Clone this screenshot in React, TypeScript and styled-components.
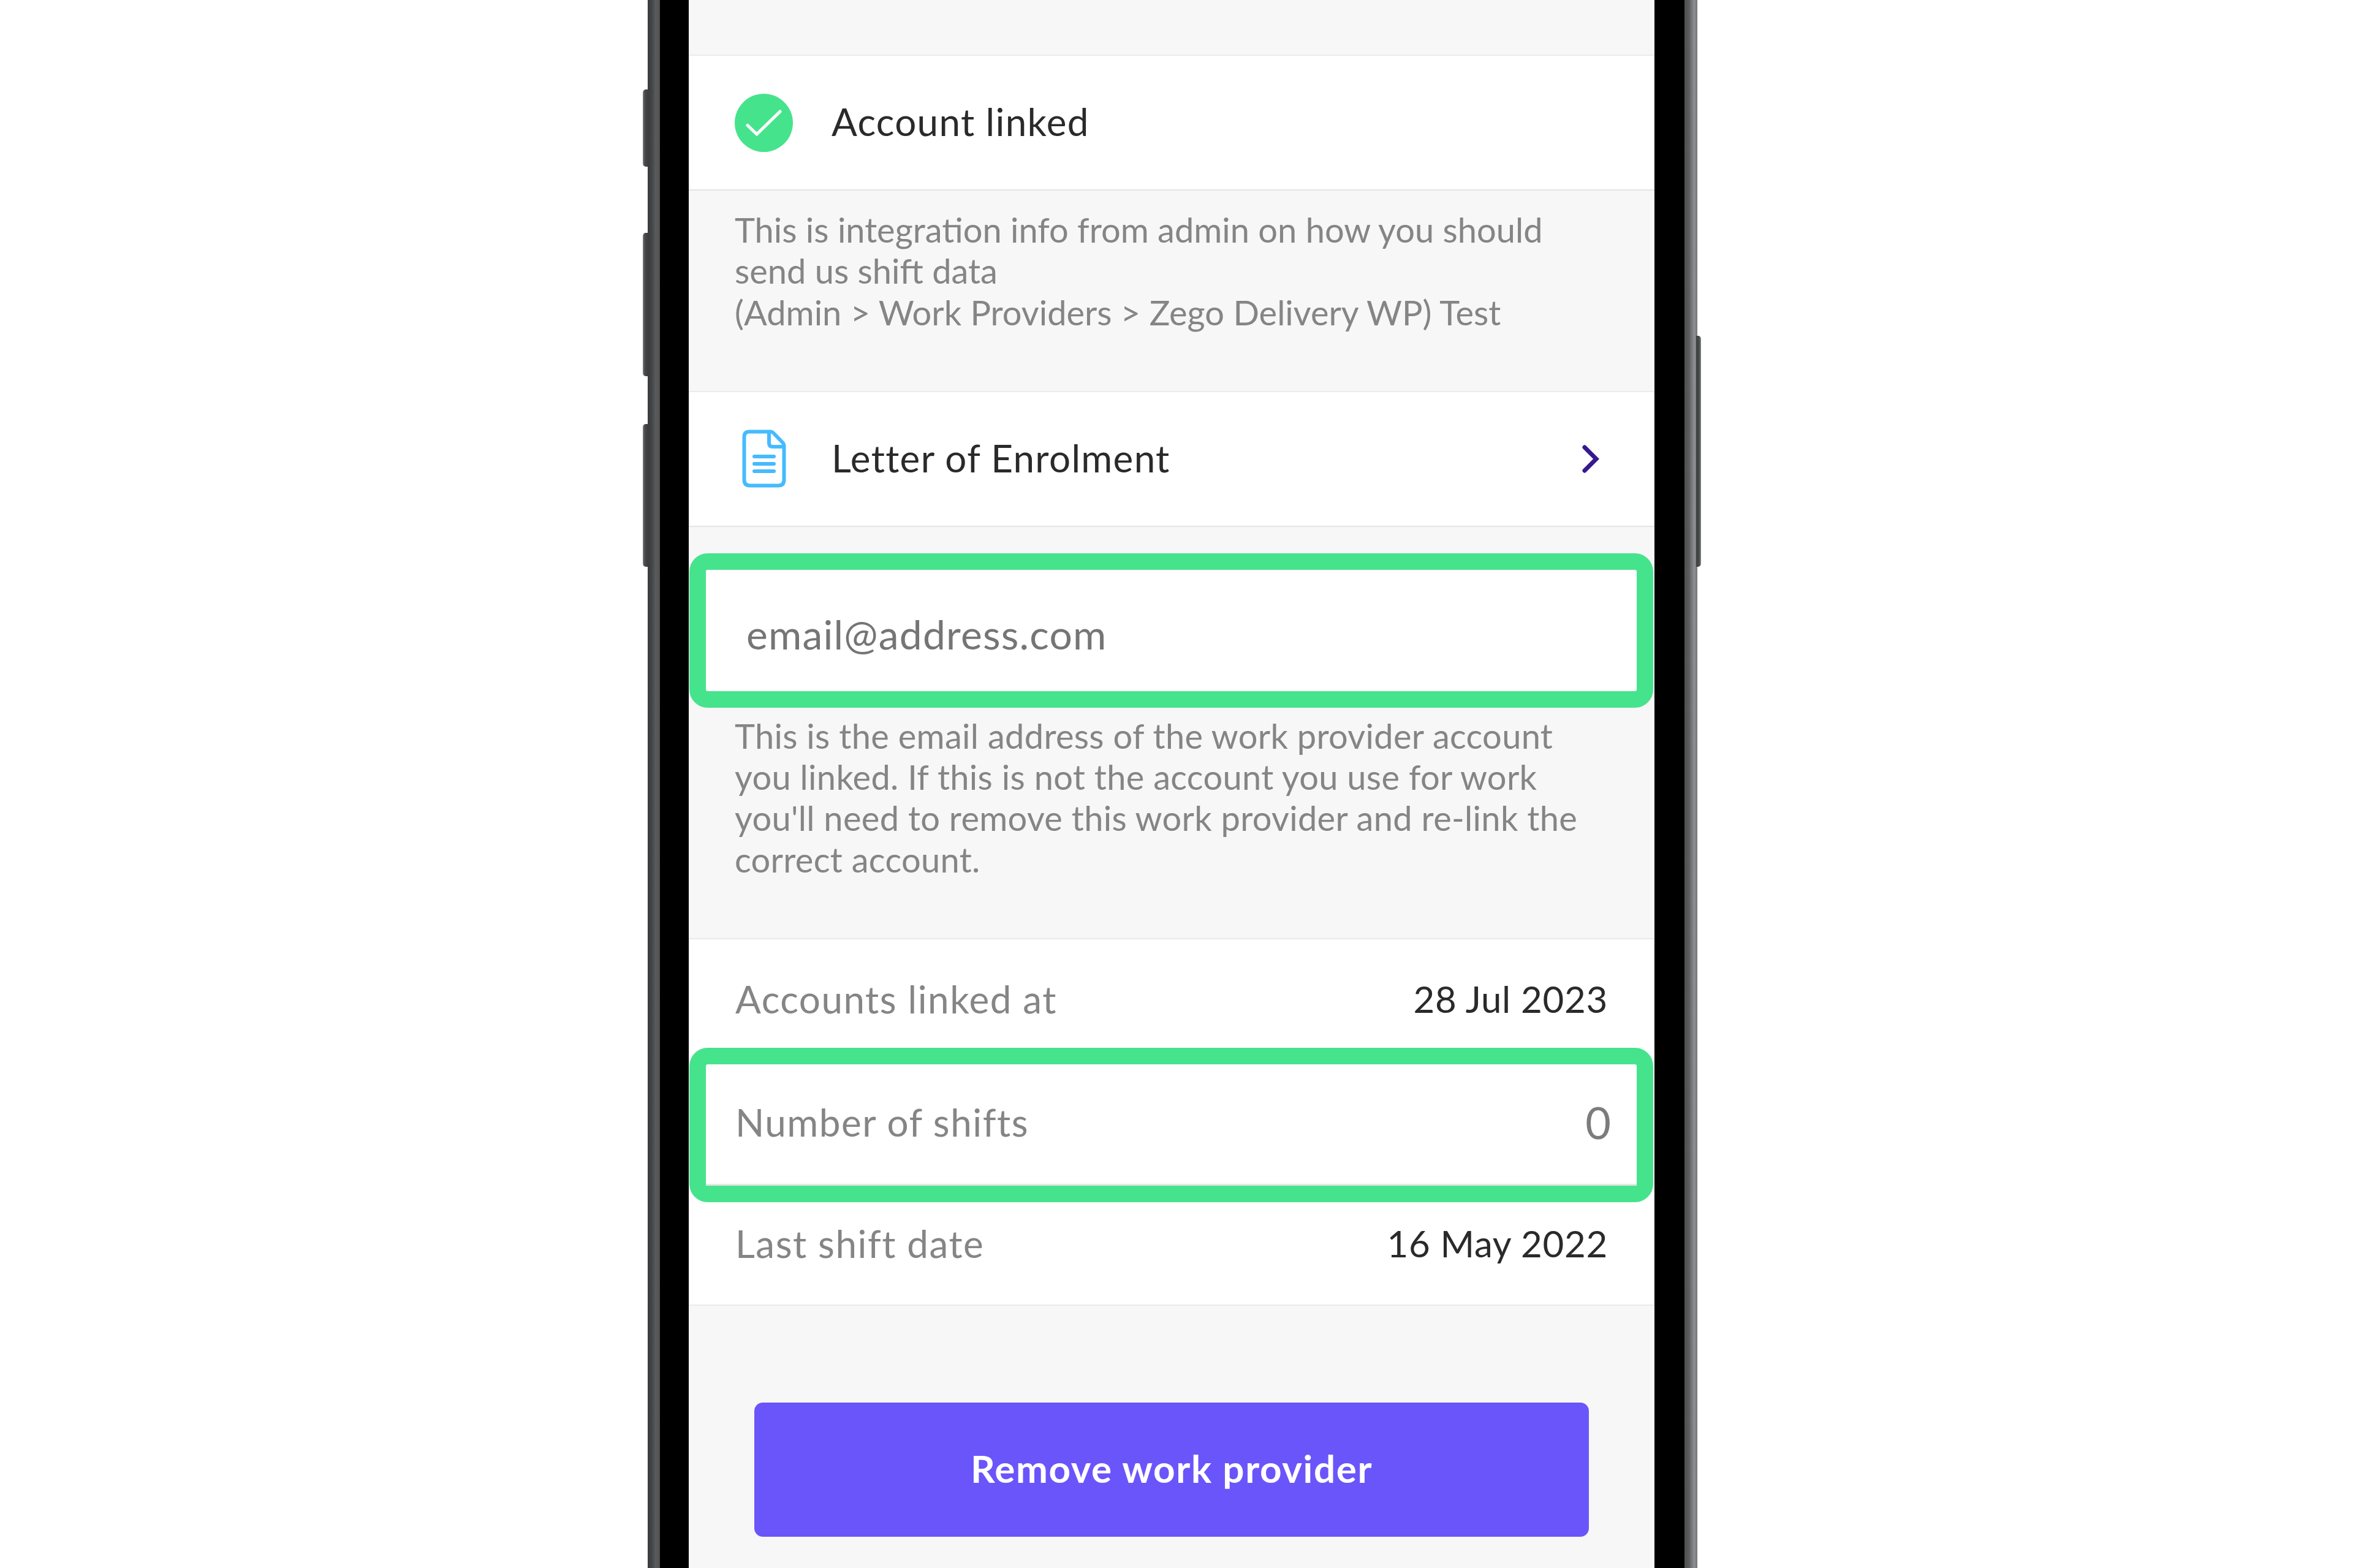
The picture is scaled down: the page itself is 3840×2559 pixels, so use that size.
import React from "react"
import styled, { createGlobalStyle } from "styled-components"

const GlobalStyle = createGlobalStyle`
  html, body {
    margin: 0;
    padding: 0;
    background: white;
  }
`

const Page = styled.div`
  width: 3840px;
  height: 2559px;
  overflow: hidden;
  padding-left: 1057px;
  box-sizing: border-box;
  background: white;
  font-family: "Lato", "Liberation Sans", sans-serif;
`

const Frame = styled.div`
  position: relative;
  width: 1713px;
  height: 2559px;
  box-sizing: border-box;
  padding: 0 21px 0 20px;
  background: linear-gradient(
    90deg,
    #3a3b3d 0,
    #444547 7px,
    #5a5b5d 13px,
    #4f5052 20px,
    #4f5052 calc(100% - 21px),
    #5a5b5d calc(100% - 14px),
    #8f9092 calc(100% - 5px),
    #727375 100%
  );
`

const SideButton = styled.div<{ $top: number; $height: number; $right?: boolean }>`
  position: absolute;
  top: ${(p) => p.$top}px;
  height: ${(p) => p.$height}px;
  width: 8px;
  ${(p) => (p.$right ? "right: -6px;" : "left: -8px;")}
  border-radius: ${(p) => (p.$right ? "0 5px 5px 0" : "5px 0 0 5px")};
  background: linear-gradient(
    ${(p) => (p.$right ? "270deg" : "90deg")},
    #88898b 0,
    #4a4b4d 35%,
    #3c3d3f 100%
  );
`

const Bezel = styled.div`
  height: 100%;
  padding: 0 49px 0 47px;
  background: black;
`

const Screen = styled.div`
  height: 100%;
  background: #f7f7f7;
  display: flex;
  flex-direction: column;
  overflow: hidden;
`

const TopGap = styled.div`
  height: 89px;
  flex: none;
`

const ListRow = styled.div`
  height: 222px;
  box-sizing: border-box;
  flex: none;
  display: flex;
  align-items: center;
  padding: 0 88px 0 75px;
  background: white;
  border-top: 2px solid #ebebeb;
  border-bottom: 2px solid #e4e4e4;
`

const IconSlot = styled.div`
  width: 95px;
  height: 95px;
  flex: none;
  svg {
    display: block;
  }
`

const RowTitle = styled.div`
  flex: 1;
  margin: 0 0 4px 63px;
  font-size: 62px;
  letter-spacing: 1.3px;
  color: #2a2a2a;
`

const Hint = styled.div<{ $top: number; $spacing: number }>`
  padding: ${(p) => p.$top}px 76px 95px 75px;
  font-size: 56px;
  line-height: 67.3px;
  letter-spacing: ${(p) => p.$spacing}px;
  color: #858585;
  flex: none;
`

const Highlight = styled.div<{ $gap?: number }>`
  margin: ${(p) => p.$gap ?? 0}px 2px 0 1px;
  border: 27px solid #46e38d;
  border-radius: 30px;
  background: white;
  flex: none;
`

const EmailBox = styled.div`
  height: 198px;
  display: flex;
  align-items: center;
  padding: 11px 0 0 66px;
  box-sizing: border-box;
  font-size: 66px;
  letter-spacing: 1.2px;
  color: #757575;
`

const Stats = styled.div`
  background: white;
  border-top: 2px solid #e9e9e9;
  border-bottom: 2px solid #ebebeb;
  flex: none;
`

const StatRow = styled.div<{ $height: number; $top: number }>`
  height: ${(p) => p.$height}px;
  box-sizing: border-box;
  padding: ${(p) => p.$top}px 76px 0 76px;
  display: flex;
  justify-content: space-between;
  align-items: flex-start;
`

const HighlightedStat = styled.div`
  height: 198px;
  box-sizing: border-box;
  padding: 57px 42px 0 48px;
  display: flex;
  justify-content: space-between;
  align-items: flex-start;
  border-bottom: 3px solid #e6e6e6;
`

const StatLabel = styled.div`
  font-size: 62px;
  line-height: 74px;
  letter-spacing: 1.5px;
  color: #858585;
`

const StatValue = styled.div`
  font-size: 60px;
  line-height: 74px;
  letter-spacing: 0.7px;
  color: #2a2a2a;
`

const ZeroValue = styled.div`
  font-size: 72px;
  line-height: 74px;
  color: #7c7c7c;
`

const RemoveButton = styled.button`
  display: block;
  flex: none;
  width: 1362px;
  height: 219px;
  margin: 158px auto 0;
  padding: 0 0 6px;
  border: none;
  border-radius: 14px;
  background: #6a55fb;
  color: white;
  font-family: inherit;
  font-size: 62px;
  font-weight: 700;
  letter-spacing: 1.6px;
`

function CheckIcon() {
  return (
    <svg width="95" height="95" viewBox="0 0 95 95">
      <circle cx="47.5" cy="47.5" r="47.5" fill="#46e38d" />
      <path
        d="M21 51.5 L36 66 L74 29"
        fill="none"
        stroke="white"
        strokeWidth="5"
        strokeLinecap="round"
        strokeLinejoin="miter"
      />
    </svg>
  )
}

function DocumentIcon() {
  return (
    <svg width="95" height="95" viewBox="0 0 95 95" fill="none" stroke="#45bbff" strokeWidth="6" strokeLinecap="round" strokeLinejoin="round">
      <path d="M24 3.5 H59 Q61 3.5 63 5.5 L78 21 Q80.5 23.5 80.5 27 V82 Q80.5 91.5 71 91.5 H25 Q15.5 91.5 15.5 82 V12 Q15.5 3.5 24 3.5 Z" />
      <path d="M56 4 V22 Q56 28 62 28 H80" />
      <path d="M32 44 H64 M32 56 H64 M32 68 H64" strokeWidth="6" />
    </svg>
  )
}

function ChevronIcon() {
  return (
    <svg width="32" height="50" viewBox="0 0 32 50" fill="none">
      <path d="M6 6 L25 25 L6 44" stroke="#36188f" strokeWidth="7" strokeLinecap="round" strokeLinejoin="miter" />
    </svg>
  )
}

export default function App() {
  return (
    <Page>
      <GlobalStyle />
      <Frame>
        <SideButton $top={146} $height={126} />
        <SideButton $top={380} $height={234} />
        <SideButton $top={692} $height={233} />
        <SideButton $top={548} $height={377} $right />
        <Bezel>
          <Screen>
            <TopGap />
            <ListRow>
              <IconSlot>
                <CheckIcon />
              </IconSlot>
              <RowTitle>Account linked</RowTitle>
            </ListRow>
            <Hint $top={30} $spacing={0}>
              This is integration info from admin on how you should
              <br />
              send us shift data
              <br />
              (Admin &gt; Work Providers &gt; Zego Delivery WP) Test
            </Hint>
            <ListRow>
              <IconSlot>
                <DocumentIcon />
              </IconSlot>
              <RowTitle>Letter of Enrolment</RowTitle>
              <ChevronIcon />
            </ListRow>
            <Highlight $gap={43}>
              <EmailBox>email@address.com</EmailBox>
            </Highlight>
            <Hint $top={12} $spacing={0.3}>
              This is the email address of the work provider account
              <br />
              you linked. If this is not the account you use for work
              <br />
              you'll need to remove this work provider and re-link the
              <br />
              correct account.
            </Hint>
            <Stats>
              <StatRow $height={177} $top={60}>
                <StatLabel>Accounts linked at</StatLabel>
                <StatValue>28 Jul 2023</StatValue>
              </StatRow>
              <Highlight>
                <HighlightedStat>
                  <StatLabel>Number of shifts</StatLabel>
                  <ZeroValue>0</ZeroValue>
                </HighlightedStat>
              </Highlight>
              <StatRow $height={167} $top={30}>
                <StatLabel>Last shift date</StatLabel>
                <StatValue>16 May 2022</StatValue>
              </StatRow>
            </Stats>
            <RemoveButton>Remove work provider</RemoveButton>
          </Screen>
        </Bezel>
      </Frame>
    </Page>
  )
}
